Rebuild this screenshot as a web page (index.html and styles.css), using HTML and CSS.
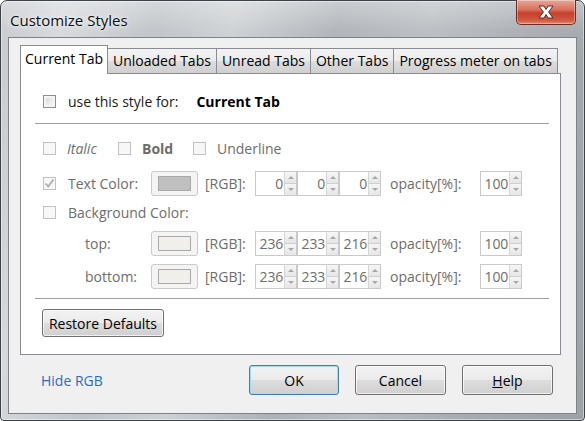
FILE: index.html
```html
<!DOCTYPE html>
<html>
<head>
<meta charset="utf-8">
<link rel="stylesheet" href="styles.css">
</head>
<body>
<div class="window">
  <div class="titlebar">
    <span class="title">Customize Styles</span>
    <div class="close">
      <svg width="20" height="14" viewBox="0 0 20 14"><path d="M3 1 H8 L10 4.5 L12 1 H17 L12.6 7 L17 13 H12 L10 9.5 L8 13 H3 L7.4 7 Z" fill="#fff" stroke="#5a2a22" stroke-width="1"/></svg>
    </div>
  </div>
  <div class="client">
    <div class="tabs">
      <div class="tab sel">Current Tab</div>
      <div class="tab">Unloaded Tabs</div>
      <div class="tab">Unread Tabs</div>
      <div class="tab">Other Tabs</div>
      <div class="tab">Progress meter on tabs</div>
    </div>
    <div class="panel">
      <div class="row r-use">
        <span class="cb enabled"></span>
        <span class="lbl dark">use this style for:</span>
        <b class="target">Current Tab</b>
      </div>
      <div class="sep"></div>
      <div class="row r-font">
        <span class="item"><span class="cb"></span><i class="lbl">Italic</i></span>
        <span class="item"><span class="cb"></span><b class="lbl">Bold</b></span>
        <span class="item"><span class="cb"></span><span class="lbl">Underline</span></span>
      </div>
      <div class="row r-text">
        <span class="cb checked"><svg width="11" height="11" viewBox="0 0 11 11"><path d="M1.5 5.5 L4.2 8.5 L9.5 1.5" fill="none" stroke="#a8a8a8" stroke-width="1.6"/></svg></span>
        <span class="lbl name">Text Color:</span>
        <span class="colorbtn"><span class="swatch grey"></span></span>
        <span class="lbl rgb">[RGB]:</span>
        <span class="spin"><span class="inp">0</span><span class="arrows"><span class="up"></span><span class="dn"></span></span></span>
        <span class="spin"><span class="inp">0</span><span class="arrows"><span class="up"></span><span class="dn"></span></span></span>
        <span class="spin"><span class="inp">0</span><span class="arrows"><span class="up"></span><span class="dn"></span></span></span>
        <span class="lbl opa">opacity[%]:</span>
        <span class="spin"><span class="inp">100</span><span class="arrows"><span class="up"></span><span class="dn"></span></span></span>
      </div>
      <div class="row r-bg">
        <span class="cb"></span>
        <span class="lbl">Background Color:</span>
      </div>
      <div class="row r-top sub">
        <span class="lbl subname">top:</span>
        <span class="colorbtn"><span class="swatch cream"></span></span>
        <span class="lbl rgb">[RGB]:</span>
        <span class="spin"><span class="inp">236</span><span class="arrows"><span class="up"></span><span class="dn"></span></span></span>
        <span class="spin"><span class="inp">233</span><span class="arrows"><span class="up"></span><span class="dn"></span></span></span>
        <span class="spin"><span class="inp">216</span><span class="arrows"><span class="up"></span><span class="dn"></span></span></span>
        <span class="lbl opa">opacity[%]:</span>
        <span class="spin"><span class="inp">100</span><span class="arrows"><span class="up"></span><span class="dn"></span></span></span>
      </div>
      <div class="row r-bottom sub">
        <span class="lbl subname">bottom:</span>
        <span class="colorbtn"><span class="swatch cream"></span></span>
        <span class="lbl rgb">[RGB]:</span>
        <span class="spin"><span class="inp">236</span><span class="arrows"><span class="up"></span><span class="dn"></span></span></span>
        <span class="spin"><span class="inp">233</span><span class="arrows"><span class="up"></span><span class="dn"></span></span></span>
        <span class="spin"><span class="inp">216</span><span class="arrows"><span class="up"></span><span class="dn"></span></span></span>
        <span class="lbl opa">opacity[%]:</span>
        <span class="spin"><span class="inp">100</span><span class="arrows"><span class="up"></span><span class="dn"></span></span></span>
      </div>
      <div class="sep sep2"></div>
      <div class="btn restore">Restore Defaults</div>
    </div>
    <div class="footer">
      <span class="link">Hide RGB</span>
      <div class="btns">
        <div class="btn dlg default">OK</div>
        <div class="btn dlg">Cancel</div>
        <div class="btn dlg"><u>H</u>elp</div>
      </div>
    </div>
  </div>
</div>
</body>
</html>
```

FILE: styles.css
```css
* { box-sizing: border-box; }
html, body { margin: 0; padding: 0; }
body {
  width: 585px;
  height: 421px;
  overflow: hidden;
  background: #ffffff;
  font-family: "Open Sans", "Noto Sans", sans-serif;
  font-size: 14px;
  color: #000;
}
.window {
  width: 585px;
  height: 421px;
  border: 1px solid #3d4248;
  border-radius: 7px 7px 4px 4px;
  padding: 0 7px 6px 7px;
  display: flex;
  flex-direction: column;
  background:
    linear-gradient(180deg, rgba(255,255,255,0.35) 0px, rgba(255,255,255,0.05) 30px, rgba(255,255,255,0) 60px),
    linear-gradient(100deg, #c6c9cd 0%, #d6d8db 10%, #bfc3c7 24%, #cdd0d3 36%, #aeb2b7 52%, #b9bdc1 66%, #a7abb0 82%, #9ea2a7 100%);
  box-shadow: inset 0 0 0 1px rgba(255,255,255,0.45);
}
.titlebar {
  height: 36px;
  display: flex;
  justify-content: space-between;
  align-items: flex-start;
}
.title {
  margin: 9px 0 0 2px;
  font-size: 15px;
  color: #0c0c0c;
  text-shadow: 0 0 8px rgba(255,255,255,0.9), 0 0 3px rgba(255,255,255,0.9);
}
.close {
  width: 60px;
  height: 25px;
  margin-top: -1px;
  margin-right: 1px;
  border: 1px solid #6a2c24;
  border-top: none;
  border-radius: 0 0 5px 5px;
  background: linear-gradient(180deg, #e8a898 0%, #d8705c 40%, #c7402a 55%, #cf5a40 85%, #e08c70 100%);
  box-shadow: inset 0 0 0 1px rgba(255,255,255,0.35);
  display: flex;
  align-items: center;
  justify-content: center;
}
.close svg { display: block; }
.client {
  flex: 1;
  background: #f0f0f0;
  border: 1px solid #7e8287;
  padding: 6px 15px 0 11px;
  display: flex;
  flex-direction: column;
}
.tabs {
  display: flex;
  align-items: flex-end;
  height: 29px;
  position: relative;
  z-index: 1;
}
.tab {
  height: 25px;
  padding: 0 5px;
  border: 1px solid #898c95;
  border-bottom: none;
  border-left: none;
  background: linear-gradient(180deg, #f3f3f3 0%, #ebebeb 50%, #dddddd 51%, #cfcfcf 100%);
  line-height: 23px;
  white-space: nowrap;
  color: #000;
}
.tab.sel {
  height: 29px;
  border-left: 1px solid #898c95;
  background: #ffffff;
  line-height: 25px;
  padding: 0 4px;
  margin-bottom: -1px;
}
.panel {
  background: #fff;
  border: 1px solid #898c95;
  height: 282px;
  padding: 0 11px 0 14px;
  display: flex;
  flex-direction: column;
  align-items: flex-start;
}
.row {
  display: flex;
  align-items: center;
  height: 24px;
  padding-left: 8px;
  white-space: nowrap;
}
.sep {
  align-self: stretch;
  height: 1px;
  background: #a0a0a0;
  margin-top: 10px;
}
.r-use { margin-top: 15px; }
.r-font { margin-top: 12px; }
.r-text { margin-top: 11px; height: 25px; }
.r-bg { margin-top: 4px; }
.r-top { margin-top: 7px; height: 25px; }
.r-bottom { margin-top: 8px; height: 25px; }
.sep2 { margin-top: 9px; }

.cb {
  width: 13px;
  height: 13px;
  border: 1px solid #c2c2c2;
  background: #f7f7f7;
  flex: none;
  margin-right: 12px;
  position: relative;
}
.cb.enabled {
  border-color: #8e8f8f;
  background: linear-gradient(135deg, #cfd2d6 0%, #eeeeee 60%, #f8f8f8 100%);
  box-shadow: inset 0 0 0 2px #f4f4f4;
}
.cb.checked svg { position: absolute; left: 0; top: 0; }
.lbl { color: #6d6d6d; }
.lbl.dark { color: #1a1a1a; }
.target { margin-left: 18px; font-weight: 700; color: #000; }
.item { display: flex; align-items: center; width: 75px; }
.item .cb { margin-right: 11px; }
.item i.lbl { font-style: italic; }
.item b.lbl { font-weight: 700; }

.name { width: 83px; }
.sub { padding-left: 50px; }
.subname { width: 66px; }
.colorbtn {
  width: 47px;
  height: 25px;
  border: 1px solid #cacaca;
  border-radius: 3px;
  background: #f4f4f4;
  display: flex;
  align-items: center;
  justify-content: center;
  flex: none;
}
.swatch {
  width: 33px;
  height: 15px;
  border: 1px solid #a9a9a9;
}
.swatch.grey { background: #c0c0c0; }
.swatch.cream { background: #f0efea; }
.rgb { margin-left: 7px; width: 50px; }
.opa { margin-left: 9px; width: 90px; }
.spin {
  display: flex;
  height: 25px;
  width: 42px;
  flex: none;
}
.inp {
  width: 29px;
  height: 25px;
  border: 1px solid #c9c9c9;
  border-right: none;
  background: #fff;
  color: #6d6d6d;
  text-align: right;
  line-height: 23px;
  padding-right: 1px;
  letter-spacing: -0.2px;
}
.arrows {
  width: 13px;
  height: 25px;
  display: flex;
  flex-direction: column;
  border: 1px solid #c9c9c9;
  border-left: 1px solid #d6d6d6;
}
.up, .dn {
  flex: 1;
  background: linear-gradient(180deg, #f6f6f6, #e6e6e6);
  position: relative;
}
.up { border-bottom: 1px solid #cfcfcf; }
.up::after, .dn::after {
  content: "";
  position: absolute;
  left: 3px;
  top: 4px;
  border-left: 3px solid transparent;
  border-right: 3px solid transparent;
}
.up::after { border-bottom: 3px solid #a7a7a7; }
.dn::after { border-top: 3px solid #a7a7a7; top: 4px; }

.btn {
  border: 1px solid #707070;
  border-radius: 3px;
  background: linear-gradient(180deg, #f2f2f2 0%, #ebebeb 48%, #dddddd 52%, #cfcfcf 100%);
  box-shadow: inset 0 0 0 1px rgba(255,255,255,0.7);
  display: flex;
  align-items: center;
  justify-content: center;
  color: #000;
}
.restore {
  margin-top: 10px;
  margin-left: 7px;
  width: 122px;
  height: 28px;
}
.footer {
  display: flex;
  align-items: center;
  justify-content: space-between;
  height: 44px;
  margin-top: 3px;
  padding-left: 21px;
  margin-right: 8px;
}
.link { color: #2d6cbf; }
.btns { display: flex; gap: 16px; }
.dlg { width: 91px; height: 30px; }
.dlg.default {
  border-color: #3c7fb1;
  box-shadow: inset 0 0 0 1px #9ddcf5;
  width: 90px;
}
```
